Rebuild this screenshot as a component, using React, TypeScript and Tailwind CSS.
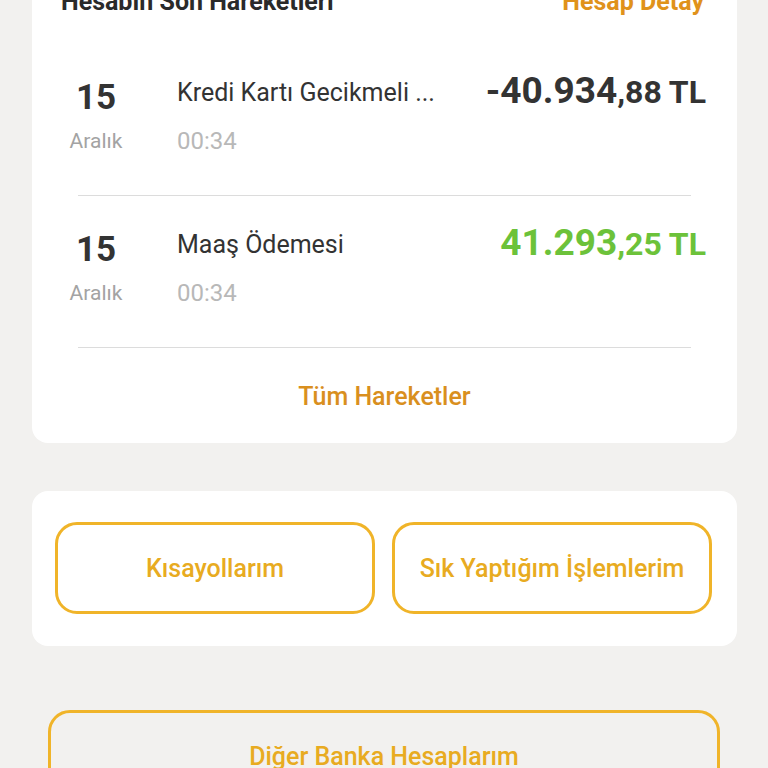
export default function App() {
  const rows = [
    { day: "15", month: "Aralık", title: "Kredi Kartı Gecikmeli ...", time: "00:34", main: "-40.934", cents: ",88 TL", green: false },
    { day: "15", month: "Aralık", title: "Maaş Ödemesi", time: "00:34", main: "41.293", cents: ",25 TL", green: true },
  ];

  return (
    <div className="min-h-[768px] h-[768px] overflow-hidden bg-[#f2f1ef] font-['Roboto',sans-serif]">
      {/* --- SON HAREKETLER KARTI --- */}
      <div className="mx-[32px] -mt-[36px] bg-white rounded-[16px] pt-[24px] w-[705px]">
        <div className="flex justify-between items-center h-[28px] mb-[28px] pl-[29px] pr-[33px]">
          <span className="text-[25px] font-bold text-[#2a2a2a]">Hesabın Son Hareketleri</span>
          <span className="text-[25px] font-bold text-[#e0921b]">Hesap Detay</span>
        </div>

        {rows.map((r, i) => (
          <div key={i}>
            <div className="flex items-start pl-[28px] pr-[31px] pt-[34px] pb-[40px]">
              <div className="w-[72px] flex flex-col items-center">
                <span className="text-[35px] leading-[40px] font-bold text-[#333333]">{r.day}</span>
                <span className="mt-[9px] text-[21px] leading-[28px] text-[#a3a3a3]">{r.month}</span>
              </div>
              <div className="ml-[45px] flex flex-col flex-1">
                <span className="text-[25px] leading-[30px] text-[#333333]">{r.title}</span>
                <span className="mt-[19px] text-[24px] leading-[28px] text-[#b8b8b8]">{r.time}</span>
              </div>
              <div className={"-mt-[1px] leading-[28px] font-bold whitespace-nowrap " + (r.green ? "text-[#6cc23a]" : "text-[#333333]")}>
                <span className="text-[37px]">{r.main}</span>
                <span className="text-[32px]">{r.cents}</span>
              </div>
            </div>
            <div className="mx-[46px] h-px bg-[#dcdcdc]" />
          </div>
        ))}

        <div className="pt-[34px] pb-[31px] flex justify-center">
          <span className="text-[25px] leading-[30px] font-medium text-[#d98f1e]">Tüm Hareketler</span>
        </div>
      </div>

      {/* --- KISAYOLLAR KARTI --- */}
      <div className="mx-[32px] mt-[48px] w-[705px] bg-white rounded-[16px] pt-[31px] pb-[32px] pl-[23px] pr-[25px] grid grid-cols-2 gap-[17px]">
        <button className="h-[92px] pt-[2px] rounded-[22px] border-[3px] border-[#f0b429] text-[25px] font-medium text-[#e8ab21]">
          Kısayollarım
        </button>
        <button className="h-[92px] pt-[2px] rounded-[22px] border-[3px] border-[#f0b429] text-[25px] font-medium text-[#e8ab21]">
          Sık Yaptığım İşlemlerim
        </button>
      </div>

      {/* --- DİĞER BANKA --- */}
      <div className="mx-[48px] mt-[64px] w-[672px]">
        <button className="w-full h-[92px] pt-[2px] rounded-[22px] border-[3px] border-[#f0b429] text-[25px] font-medium text-[#e8ab21]">
          Diğer Banka Hesaplarım
        </button>
      </div>
    </div>
  );
}
